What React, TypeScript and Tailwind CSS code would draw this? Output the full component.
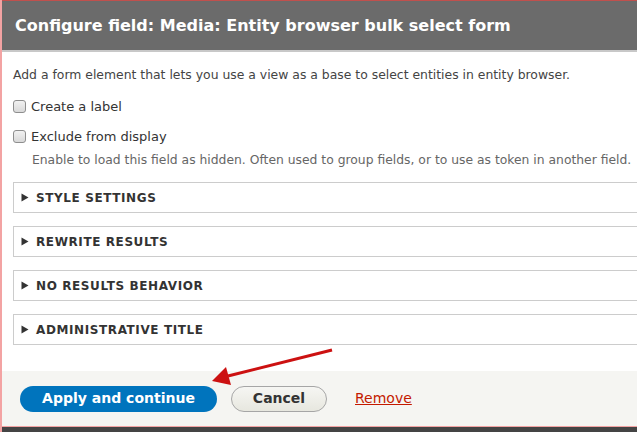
import React from 'react'

const sections = ['Style settings', 'Rewrite results', 'No results behavior', 'Administrative title']

function Checkbox({ label }: { label: string }) {
  return (
    <label className="flex items-center gap-[5px] text-[13px] text-[#333]">
      <span className="inline-block h-[13px] w-[13px] rounded-[3px] border border-[#8e8e8e] bg-gradient-to-b from-[#f2f2f2] to-[#d9d9d9]" />
      {label}
    </label>
  )
}

function Details({ title }: { title: string }) {
  return (
    <div className="flex h-[31px] items-center border border-[#cccccc] pl-[7px]">
      <svg width="8" height="9" viewBox="0 0 8 9" className="mr-[7px]">
        <path d="M0.5 0.5 L7.5 4.5 L0.5 8.5 Z" fill="#333" />
      </svg>
      <span className="text-[12px] font-bold uppercase tracking-[0.05em] text-[#333]">{title}</span>
    </div>
  )
}

export default function App() {
  return (
    <div
      className="relative flex h-[432px] w-[637px] flex-col overflow-hidden border-l-2 border-[#f3a3a3] bg-white"
      style={{ fontFamily: '"DejaVu Sans", sans-serif' }}>
      <div className="flex h-[52px] items-center border-t border-b-2 border-t-[#c0504d] border-b-[#c8c8c8] bg-[#6b6b6b] pl-[13px]">
        <h1 className="text-[16px] font-bold text-white">Configure field: Media: Entity browser bulk select form</h1>
      </div>

      <div className="flex flex-1 flex-col pl-[11px] pt-[14px]">
        <p className="text-[12.4px] text-[#444]">
          Add a form element that lets you use a view as a base to select entities in entity browser.
        </p>
        <div className="mt-[12px] flex flex-col gap-[11px]">
          <Checkbox label="Create a label" />
          <div>
            <Checkbox label="Exclude from display" />
            <p className="mt-[4px] pl-[19px] text-[12.35px] text-[#666]">
              Enable to load this field as hidden. Often used to group fields, or to use as token in another field.
            </p>
          </div>
        </div>
        <div className="-mr-[4px] mt-[13px] flex flex-col gap-[13px]">
          {sections.map((s) => (
            <Details key={s} title={s} />
          ))}
        </div>
      </div>

      <div className="flex h-[55px] items-center gap-[14px] bg-[#f5f5f2] pl-[18px]">
        <button className="h-[26px] w-[197px] rounded-full bg-[#0074bd] text-[14px] font-bold text-white">
          Apply and continue
        </button>
        <button className="h-[26px] w-[96px] rounded-full border border-[#a6a6a6] bg-gradient-to-b from-[#f6f6f3] to-[#e7e7df] text-[14px] font-bold text-[#333]">
          Cancel
        </button>
        <a className="ml-[14px] text-[14px] text-[#c41a00] underline">Remove</a>
      </div>
      <div className="h-[1px] bg-[#f3a3a3]" />
      <div className="h-[5px] bg-[#444]" />

      <svg className="absolute left-0 top-0" width="637" height="432" viewBox="0 0 637 432">
        <line x1="330" y1="350" x2="226" y2="376" stroke="#cc1111" strokeWidth="3" />
        <path d="M210 381 L224 367 L229 385 Z" fill="#cc1111" />
      </svg>
    </div>
  )
}
